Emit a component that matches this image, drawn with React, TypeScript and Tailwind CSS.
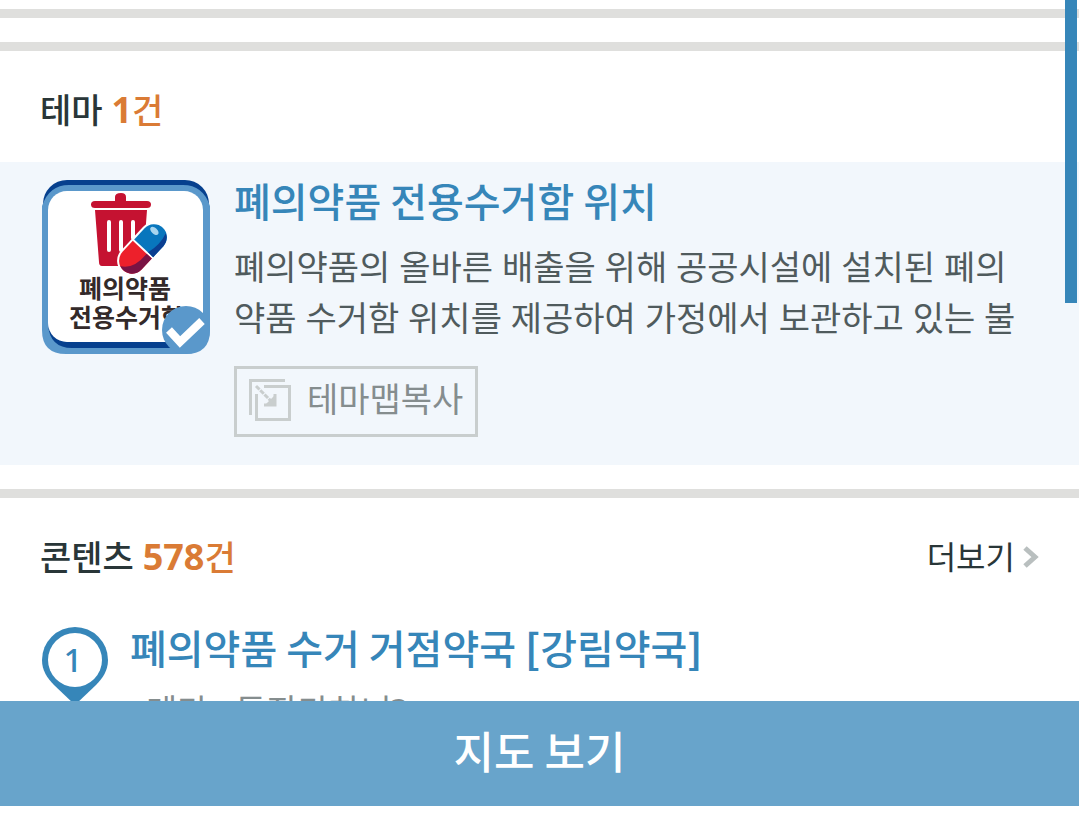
import type { ReactNode } from 'react';

const places = [{ id: 1, name: '폐의약품 수거 거점약국', branch: '강림약국', theme: '테마 : 등잔마하니?' }];

function Divider() {
  return <div className="h-[9px] shrink-0 bg-[#dfdfdd]" />;
}

function Heading({ title, count, children }: { title: string; count: number; children?: ReactNode }) {
  return (
    <div className="flex items-center justify-between px-10">
      <h2 className="text-[34px] leading-[48px] font-medium text-[#293638]">
        {title} <span className="text-[#da7b35]"><span className="text-[36px] font-bold">{count}</span>건</span>
      </h2>
      {children}
    </div>
  );
}

function ThemeIcon() {
  return (
    <svg viewBox="0 0 168 174" className="h-[174px] w-[168px] shrink-0" role="img" aria-label="폐의약품 전용수거함">
      <rect x="1" y="0" width="166" height="170" rx="24" fill="#06408e" />
      <path d="M0 26Q7 5 27 5H141Q161 5 168 26V150Q168 174 144 174H24Q0 174 0 150Z" fill="#5a98cb" />
      <path d="M6 145Q8 168 30 168H140V162H30Q12 162 6 145Z" fill="#06408e" />
      <rect x="6" y="11" width="155" height="151" rx="19" fill="#fff" />
      <path d="M53 21H73V17Q73 13 79 13Q84 13 84 17V21H105Q109 21 109 24.500Q109 28 105 28H53Q49 28 49 24.500Q49 21 53 21Z" fill="#c51231" />
      <path d="M53 30H105L101 84Q101 86 98 86H60Q57 86 57 82Z" fill="#c51231" />
      <path d="M67 42V70M79 42V70M91 42V58" stroke="#fff" strokeWidth="4" strokeLinecap="round" />
      <g transform="translate(101 69) rotate(43)">
        <rect x="-15" y="-31" width="30" height="62" rx="15" fill="#fff" />
        <path d="M-13 -1V-16A13 13 0 0 1 13-16V-1Z" fill="#0876bd" />
        <path d="M13 -1V-16A13 13 0 0 0 6-27Q10-15 6-1Z" fill="#0b3e91" />
        <path d="M-13 1V16A13 13 0 0 0 13 16V1Z" fill="#ed202b" />
        <path d="M13 1V16A13 13 0 0 1-5 28Q7 22 6 1Z" fill="#791344" />
        <ellipse cx="-4" cy="-21" rx="5" ry="3" fill="#a8d5ee" />
      </g>
      <text x="83" y="118" textAnchor="middle" fontSize="25" fontWeight="700" fill="#332a2a">폐의약품</text>
      <text x="27" y="147" fontSize="25" fontWeight="700" fill="#332a2a">전용수거함</text>
      <circle cx="144" cy="150" r="24" fill="#5a98cb" />
      <path d="M127 150L138 162L160 141" fill="none" stroke="#fff" strokeWidth="8" />
    </svg>
  );
}

function CopyIcon() {
  return (
    <svg viewBox="0 0 42 42" className="size-[42px]" fill="none" stroke="#c9cece" strokeWidth="3" aria-hidden="true">
      <path d="M1.5 36V1.5H36M15 7.500H40.500V40.500H7.500V15" />
      <path d="M7 7L24 24" strokeDasharray="5 1" />
      <path d="M26 15V26H15" strokeWidth="3" />
      <path d="M25 17V25H17Z" fill="#c9cece" stroke="none" />
    </svg>
  );
}

function Pin({ number }: { number: number }) {
  return (
    <svg viewBox="0 0 66 78" className="h-[78px] w-[66px] shrink-0" role="img" aria-label={`${number}번`}>
      <path d="M33 0A33 33 0 0 0 0 33C0 43 5 51 12 58L33 78L54 58C61 51 66 43 66 33A33 33 0 0 0 33 0Z" fill="#3686b9" />
      <circle cx="33" cy="33" r="27" fill="#fff" />
      <text x="31" y="45" textAnchor="middle" fontSize="33" fontWeight="500" fill="#3686b9">{number}</text>
    </svg>
  );
}

export default function App() {
  return (
    <div className="relative flex h-screen flex-col overflow-hidden bg-white pb-5 font-['Noto_Sans','Noto_Sans_CJK_KR',sans-serif]">
      <main className="min-h-0 flex-1 overflow-hidden pt-[9px]">
        <Divider />
        <div className="h-6" />
        <Divider />

        <section className="pt-[35px]">
          <Heading title="테마" count={1} />
          <article className="mt-7 flex gap-6 bg-[#f2f7fc] pt-[18px] pr-14 pb-7 pl-[42px]">
            <ThemeIcon />
            <div className="min-w-0 flex-1">
              <h3 className="font-['Noto_Sans_CJK_KR',sans-serif] text-[40px] leading-10 font-medium text-[#3686b9]">
                <a href="#theme">폐의약품 전용수거함 위치</a>
              </h3>
              <p className="mt-[22px] line-clamp-2 text-[34px] leading-[51px] break-all text-[#505b5d]">
                폐의약품의 올바른 배출을 위해 공공시설에 설치된 폐의약품 수거함 위치를 제공하여 가정에서 보관하고 있는 불
              </p>
              <button type="button" className="mt-[22px] flex h-[71px] items-center gap-4 border-3 border-[#c9cece] px-3 pb-1 text-[34px] text-[#858d8e]">
                <CopyIcon />
                테마맵복사
              </button>
            </div>
          </article>
        </section>

        <div className="h-6" />
        <Divider />

        <section className="pt-[35px]">
          <Heading title="콘텐츠" count={578}>
            <a href="#more" className="flex items-center gap-2 text-[32px] leading-[48px] text-[#293638]">
              더보기
              <svg viewBox="0 0 16 22" className="h-[22px] w-4" fill="none" stroke="#b9bfbf" strokeWidth="5" aria-hidden="true">
                <path d="M2 2L12 11L2 20" />
              </svg>
            </a>
          </Heading>
          <ul className="mt-[46px] px-[42px]">
            {places.map((place) => (
              <li key={place.id} className="flex gap-[22px]">
                <Pin number={place.id} />
                <div className="min-w-0">
                  <h3 className="font-['Noto_Sans_CJK_KR',sans-serif] text-[40px] leading-10 font-medium text-[#3686b9]">
                    <a href="#place">
                      {place.name} <span className="font-bold">[</span>{place.branch}<span className="font-bold">]</span>
                    </a>
                  </h3>
                  <p className="mt-5 pl-4 text-[34px] leading-[48px] text-[#858d8e]">{place.theme}</p>
                </div>
              </li>
            ))}
          </ul>
        </section>
      </main>

      <button type="button" className="h-[105px] w-full shrink-0 bg-[#68a4cb] pb-2 font-['Noto_Sans_CJK_KR',sans-serif] text-[44px] font-medium text-white">
        지도 보기
      </button>

      {/* scroll indicator floating over the list */}
      <div className="absolute top-0 right-0.5 h-[303px] w-3 bg-[#3686b9]" />
    </div>
  );
}
